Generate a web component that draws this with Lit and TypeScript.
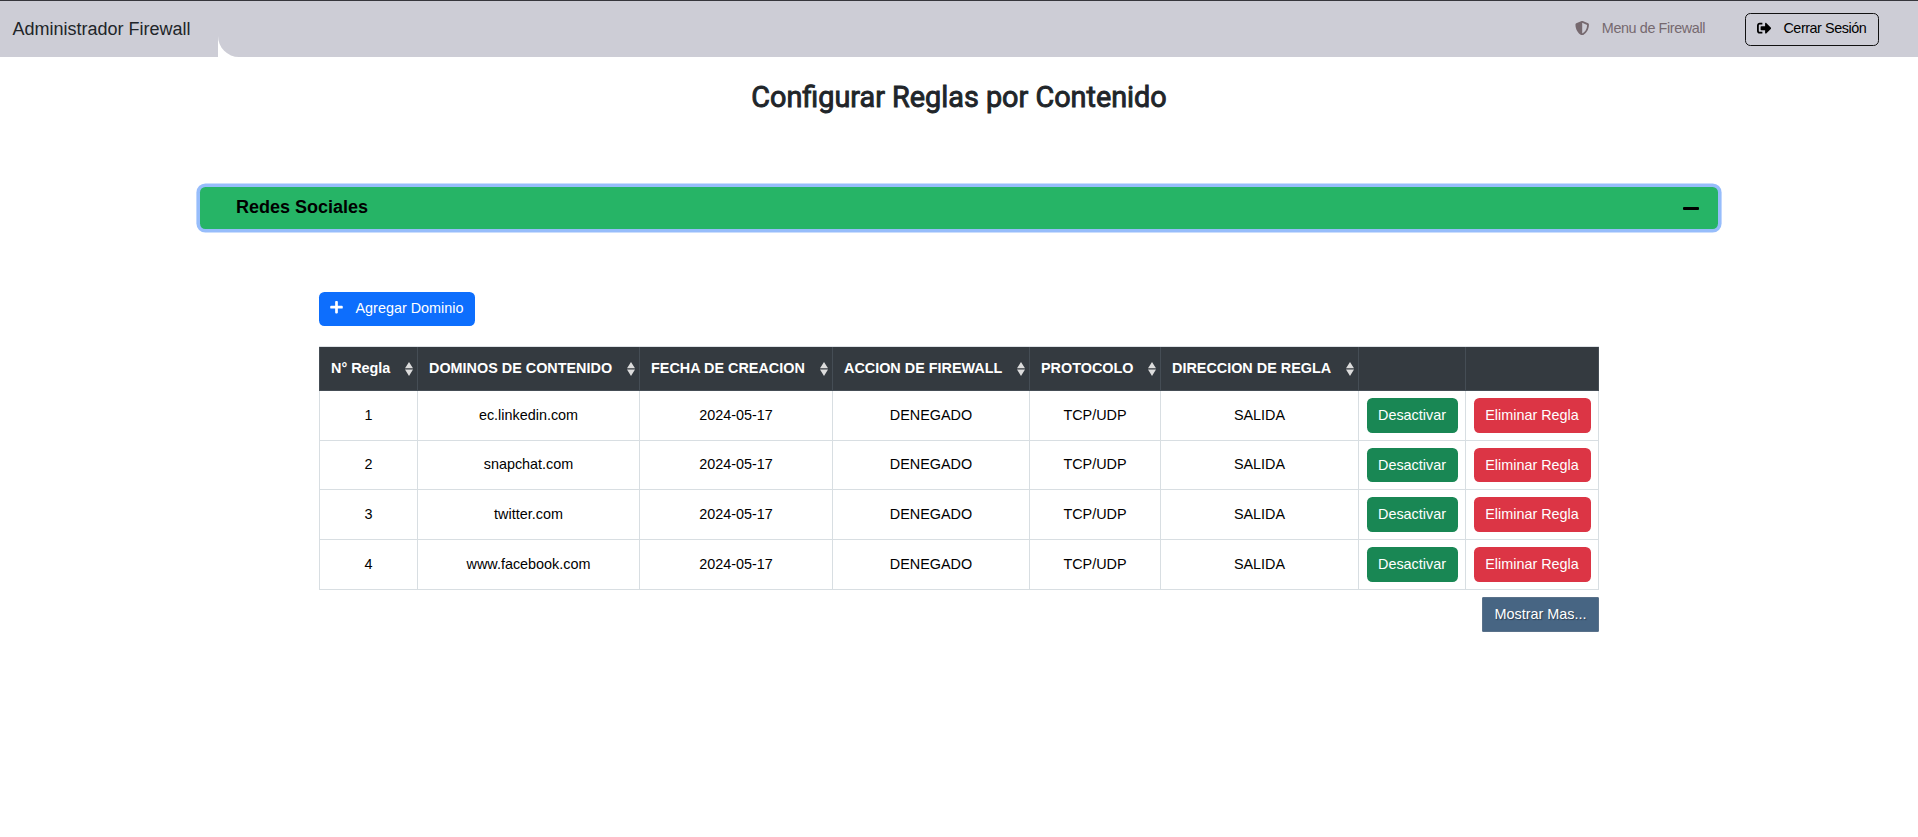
import { LitElement, html, css, svg } from "lit";
import { customElement, property } from "lit/decorators.js";

const ICONS: Record<string, { box: string; d: string }> = {
  shield: {
    box: "0 0 512 512",
    d: "M466.5 83.7l-192-80a48.15 48.15 0 0 0-36.9 0l-192 80C27.7 91.1 16 108.6 16 128c0 198.5 114.5 335.7 221.5 380.3 11.8 4.9 25.1 4.9 36.9 0C360.1 472.6 496 349.3 496 128c0-19.4-11.7-36.9-29.5-44.3zM256.1 446.3l-.1-381 175.9 73.3c-3.3 151.4-82.1 261.1-175.8 307.7z",
  },
  exit: {
    box: "0 0 512 512",
    d: "M497 273L329 441c-15 15-41 4.5-41-17v-96H152c-13.3 0-24-10.7-24-24v-96c0-13.3 10.7-24 24-24h136V88c0-21.4 25.9-32 41-17l168 168c9.3 9.4 9.3 24.6 0 34zM192 436v-40c0-6.6-5.4-12-12-12H96c-17.7 0-32-14.3-32-32V160c0-17.7 14.3-32 32-32h84c6.6 0 12-5.4 12-12V76c0-6.6-5.4-12-12-12H96c-53 0-96 43-96 96v192c0 53 43 96 96 96h84c6.6 0 12-5.4 12-12z",
  },
  plus: {
    box: "0 0 448 512",
    d: "M416 208H272V64c0-17.67-14.33-32-32-32h-32c-17.67 0-32 14.33-32 32v144H32c-17.67 0-32 14.33-32 32v32c0 17.67 14.33 32 32 32h144v144c0 17.67 14.33 32 32 32h32c17.67 0 32-14.33 32-32V304h144c17.67 0 32-14.33 32-32v-32c0-17.67-14.33-32-32-32z",
  },
};

@customElement("fw-icon")
class FwIcon extends LitElement {
  @property() name = "plus";
  static styles = css`
    :host { display: inline-flex; }
    svg { width: 100%; height: 100%; fill: currentColor; }
  `;
  render() {
    const icon = ICONS[this.name];
    return html`<svg viewBox=${icon.box}>${svg`<path d=${icon.d}></path>`}</svg>`;
  }
}

const HEADERS = ["N° Regla", "DOMINOS DE CONTENIDO", "FECHA DE CREACION", "ACCION DE FIREWALL", "PROTOCOLO", "DIRECCION DE REGLA"];
const DOMAINS = ["ec.linkedin.com", "snapchat.com", "twitter.com", "www.facebook.com"];

@customElement("app-root")
class AppRoot extends LitElement {
  static styles = css`
    :host {
      display: block;
      height: 837px;
      overflow: hidden;
      background: #fff;
      color: #000;
      font: 14.4px/21.6px "Liberation Sans", Arial, sans-serif;
    }
    * { box-sizing: border-box; }
    button { font: inherit; margin: 0; white-space: nowrap; }
    .topbar {
      display: flex;
      height: 57px;
      border-top: 1px solid #36363c;
      background: #fff;
    }
    .brand {
      width: 218px;
      padding: 15px 0 0 12.5px;
      background: #cdcdd6;
      color: #212529;
      font-size: 18px;
      line-height: 27px;
      white-space: nowrap;
    }
    .menu {
      flex: 1;
      display: flex;
      justify-content: flex-end;
      align-items: flex-start;
      padding-right: 39px;
      background: #cdcdd6;
      border-bottom-left-radius: 21px;
    }
    .link {
      display: flex;
      margin: 17px 40px 0 0;
      color: #76696f;
      letter-spacing: -0.4px;
    }
    .link fw-icon { width: 14.4px; height: 14.4px; margin: 3px 12px 0 0; }
    .logout {
      display: flex;
      width: 134px;
      height: 33px;
      margin-top: 12px;
      padding: 4px 0 0 11px;
      border: 1px solid #111;
      border-radius: 5.4px;
      background: none;
      color: #000;
      letter-spacing: -0.45px;
    }
    .logout fw-icon { width: 14.4px; height: 14.4px; margin: 3px 12px 0 0; }
    .title {
      margin: 22px 0 0;
      color: #212529;
      text-align: center;
      font: 400 28.8px/36px Roboto, sans-serif;
      -webkit-text-stroke: 0.9px #212529;
    }
    .accordion {
      display: flex;
      justify-content: space-between;
      align-items: center;
      width: 1518px;
      height: 42px;
      margin: 72px auto 0;
      padding: 0 19px 0 36px;
      border: 0;
      border-radius: 5.4px;
      background: #26b466;
      box-shadow: 0 0 0 3.6px #97bdfb;
      font-weight: 700;
      font-size: 18px;
    }
    .minus { width: 16px; height: 3.4px; margin-top: 1px; border-radius: 1px; background: #000; }
    .content { width: 1280px; margin: 63px auto 0; }
    .add {
      display: flex;
      width: 156px;
      height: 34px;
      padding: 6px 0 0 11px;
      border: 0;
      border-radius: 5.4px;
      background: #0d6efd;
      color: #fff;
    }
    .add fw-icon { width: 13px; height: 14.4px; margin: 2px 12.5px 0 0; }
    .table {
      display: grid;
      grid-template-columns: 98px 222px 193px 197px 131px 198px 107px 134px;
      grid-template-rows: 44px 50px 49px 50px 50px;
      margin-top: 20px;
      border-top: 1px solid #dee2e6;
    }
    .cell {
      display: flex;
      align-items: center;
      justify-content: center;
      border-left: 1px solid #d8dee2;
      border-bottom: 1px solid #d8dee2;
    }
    .cell:nth-child(8n) { border-right: 1px solid #d8dee2; }
    .head {
      justify-content: space-between;
      padding: 0 4px 0 11px;
      border-color: #454d55;
      background: #343a40;
      color: #fff;
      font-weight: 700;
      white-space: nowrap;
    }
    .head:nth-child(8n) { border-right-color: #454d55; }
    .sort { width: 8px; height: 14px; fill: #dcdcdc; margin-top: 1px; }
    .action {
      height: 34.5px;
      padding: 1px 0 0;
      border: 0;
      border-radius: 5.4px;
      color: #fff;
    }
    .off { width: 91px; background: #198754; }
    .del { width: 117px; background: #dc3545; }
    .more {
      display: block;
      width: 117px;
      height: 35px;
      margin: 7px 0 0 auto;
      padding: 0;
      border: 1px solid #59718a;
      border-radius: 1px;
      background: #476583;
      color: #fff;
      text-shadow: 1px 1px 1px #2b3f52;
    }
  `;

  render() {
    return html`
      <nav class="topbar">
        <div class="brand">Administrador Firewall</div>
        <div class="menu">
          <div class="link"><fw-icon name="shield"></fw-icon>Menu de Firewall</div>
          <button class="logout"><fw-icon name="exit"></fw-icon>Cerrar Sesión</button>
        </div>
      </nav>
      <h1 class="title">Configurar Reglas por Contenido</h1>
      <button class="accordion">Redes Sociales<span class="minus"></span></button>
      <main class="content">
        <button class="add"><fw-icon name="plus"></fw-icon>Agregar Dominio</button>
        <div class="table">
          ${HEADERS.map((h) => html`<div class="cell head"><span class="label">${h}</span>
            <svg class="sort" viewBox="0 0 8 14"><path d="M4 0L8 6.2H0zM0 7.6H8L4 14z"></path></svg></div>`)}
          <div class="cell head"></div><div class="cell head"></div>
          ${DOMAINS.map((d, i) => html`
            <div class="cell">${i + 1}</div>
            <div class="cell">${d}</div>
            <div class="cell">2024-05-17</div>
            <div class="cell">DENEGADO</div>
            <div class="cell">TCP/UDP</div>
            <div class="cell">SALIDA</div>
            <div class="cell"><button class="action off">Desactivar</button></div>
            <div class="cell"><button class="action del">Eliminar Regla</button></div>`)}
        </div>
        <button class="more">Mostrar Mas...</button>
      </main>
    `;
  }
}
